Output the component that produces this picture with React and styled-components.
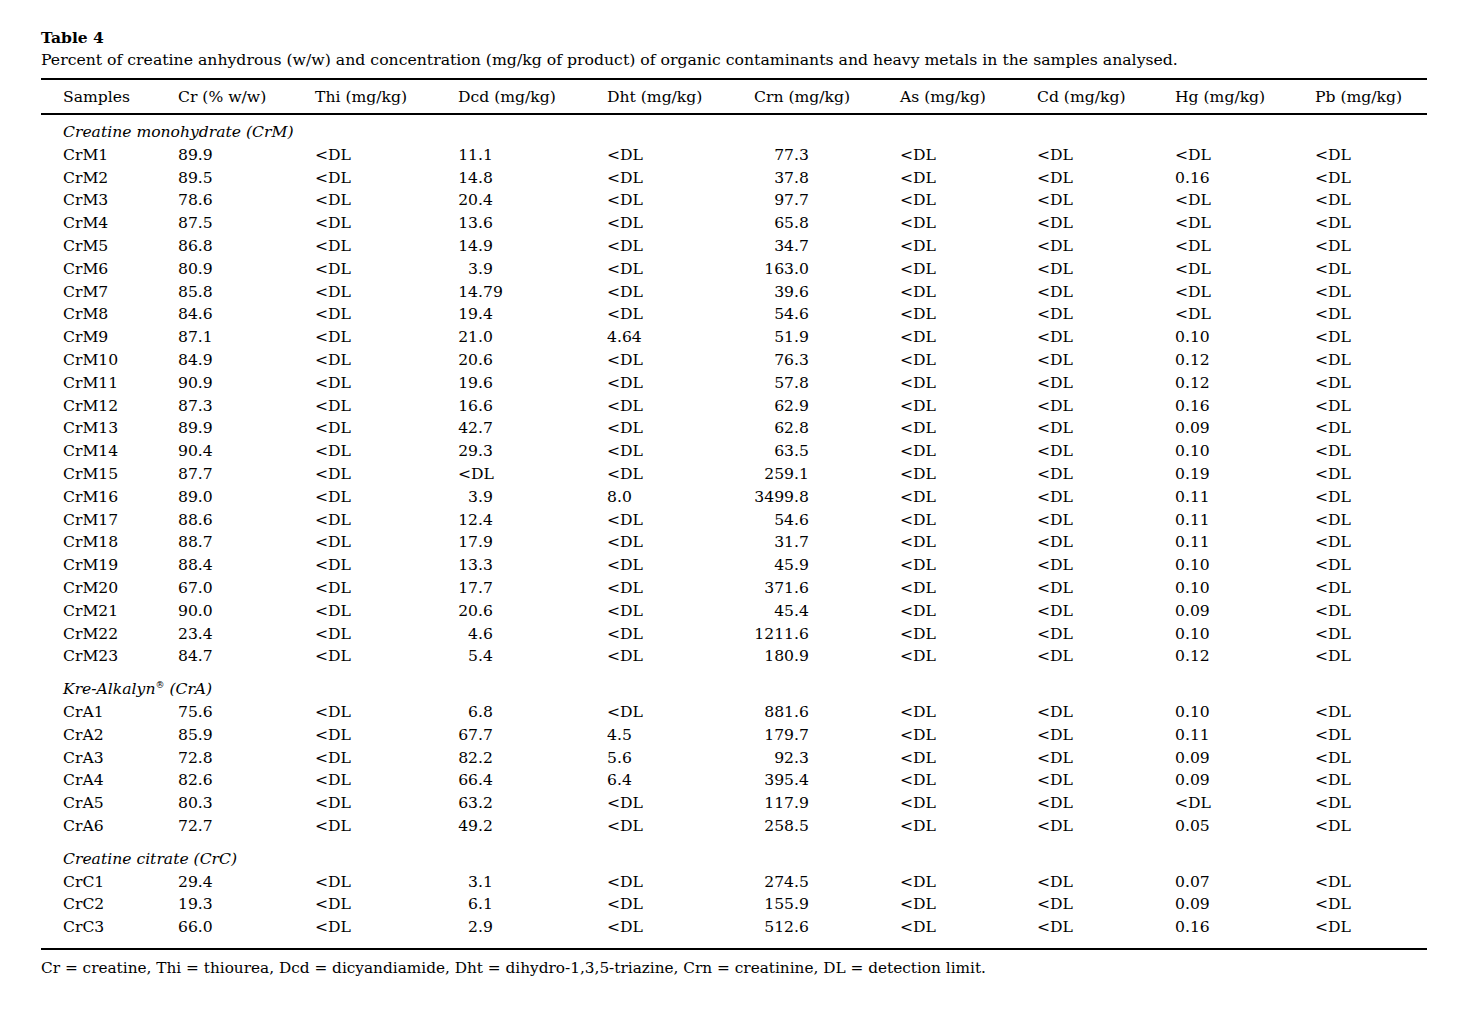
import React from 'react';
import styled, { createGlobalStyle } from 'styled-components';

const GlobalStyle = createGlobalStyle`
  body {
    margin: 0;
    background: #fff;
    color: #000;
    font-family: "DejaVu Serif", "Liberation Serif", serif;
  }
`;

// column widths, measured from the left edge of the samples column
const COLS = '115px 137px 143px 149px 147px 146px 137px 138px 140px 1fr';

const sections = [
  {
    title: 'Creatine monohydrate (CrM)',
    rows: [
      ['CrM1', '89.9', '<DL', '11.1', '<DL', '77.3', '<DL', '<DL', '<DL', '<DL'],
      ['CrM2', '89.5', '<DL', '14.8', '<DL', '37.8', '<DL', '<DL', '0.16', '<DL'],
      ['CrM3', '78.6', '<DL', '20.4', '<DL', '97.7', '<DL', '<DL', '<DL', '<DL'],
      ['CrM4', '87.5', '<DL', '13.6', '<DL', '65.8', '<DL', '<DL', '<DL', '<DL'],
      ['CrM5', '86.8', '<DL', '14.9', '<DL', '34.7', '<DL', '<DL', '<DL', '<DL'],
      ['CrM6', '80.9', '<DL', '3.9', '<DL', '163.0', '<DL', '<DL', '<DL', '<DL'],
      ['CrM7', '85.8', '<DL', '14.79', '<DL', '39.6', '<DL', '<DL', '<DL', '<DL'],
      ['CrM8', '84.6', '<DL', '19.4', '<DL', '54.6', '<DL', '<DL', '<DL', '<DL'],
      ['CrM9', '87.1', '<DL', '21.0', '4.64', '51.9', '<DL', '<DL', '0.10', '<DL'],
      ['CrM10', '84.9', '<DL', '20.6', '<DL', '76.3', '<DL', '<DL', '0.12', '<DL'],
      ['CrM11', '90.9', '<DL', '19.6', '<DL', '57.8', '<DL', '<DL', '0.12', '<DL'],
      ['CrM12', '87.3', '<DL', '16.6', '<DL', '62.9', '<DL', '<DL', '0.16', '<DL'],
      ['CrM13', '89.9', '<DL', '42.7', '<DL', '62.8', '<DL', '<DL', '0.09', '<DL'],
      ['CrM14', '90.4', '<DL', '29.3', '<DL', '63.5', '<DL', '<DL', '0.10', '<DL'],
      ['CrM15', '87.7', '<DL', '<DL', '<DL', '259.1', '<DL', '<DL', '0.19', '<DL'],
      ['CrM16', '89.0', '<DL', '3.9', '8.0', '3499.8', '<DL', '<DL', '0.11', '<DL'],
      ['CrM17', '88.6', '<DL', '12.4', '<DL', '54.6', '<DL', '<DL', '0.11', '<DL'],
      ['CrM18', '88.7', '<DL', '17.9', '<DL', '31.7', '<DL', '<DL', '0.11', '<DL'],
      ['CrM19', '88.4', '<DL', '13.3', '<DL', '45.9', '<DL', '<DL', '0.10', '<DL'],
      ['CrM20', '67.0', '<DL', '17.7', '<DL', '371.6', '<DL', '<DL', '0.10', '<DL'],
      ['CrM21', '90.0', '<DL', '20.6', '<DL', '45.4', '<DL', '<DL', '0.09', '<DL'],
      ['CrM22', '23.4', '<DL', '4.6', '<DL', '1211.6', '<DL', '<DL', '0.10', '<DL'],
      ['CrM23', '84.7', '<DL', '5.4', '<DL', '180.9', '<DL', '<DL', '0.12', '<DL'],
    ],
  },
  {
    title: (
      <>
        Kre-Alkalyn<sup>®</sup> (CrA)
      </>
    ),
    rows: [
      ['CrA1', '75.6', '<DL', '6.8', '<DL', '881.6', '<DL', '<DL', '0.10', '<DL'],
      ['CrA2', '85.9', '<DL', '67.7', '4.5', '179.7', '<DL', '<DL', '0.11', '<DL'],
      ['CrA3', '72.8', '<DL', '82.2', '5.6', '92.3', '<DL', '<DL', '0.09', '<DL'],
      ['CrA4', '82.6', '<DL', '66.4', '6.4', '395.4', '<DL', '<DL', '0.09', '<DL'],
      ['CrA5', '80.3', '<DL', '63.2', '<DL', '117.9', '<DL', '<DL', '<DL', '<DL'],
      ['CrA6', '72.7', '<DL', '49.2', '<DL', '258.5', '<DL', '<DL', '0.05', '<DL'],
    ],
  },
  {
    title: 'Creatine citrate (CrC)',
    rows: [
      ['CrC1', '29.4', '<DL', '3.1', '<DL', '274.5', '<DL', '<DL', '0.07', '<DL'],
      ['CrC2', '19.3', '<DL', '6.1', '<DL', '155.9', '<DL', '<DL', '0.09', '<DL'],
      ['CrC3', '66.0', '<DL', '2.9', '<DL', '512.6', '<DL', '<DL', '0.16', '<DL'],
    ],
  },
];

const headers = [
  'Samples',
  'Cr (% w/w)',
  'Thi (mg/kg)',
  'Dcd (mg/kg)',
  'Dht (mg/kg)',
  'Crn (mg/kg)',
  'As (mg/kg)',
  'Cd (mg/kg)',
  'Hg (mg/kg)',
  'Pb (mg/kg)',
];

// decimal point offsets for the aligned columns (Dcd, Crn)
const decimalPoint = { 3: 20, 5: 40 };

const Page = styled.div`
  padding: 28px 31px 40px 41px;
`;

const Title = styled.div`
  font-weight: bold;
  font-size: 15.5px;
  line-height: 20px;
`;

const Caption = styled.div`
  font-size: 15.7px;
  line-height: 22px;
  margin-top: 1px;
  margin-bottom: 7px;
`;

const Table = styled.div`
  border-top: 2px solid #000;
  border-bottom: 2px solid #000;
  font-size: 15.6px;
`;

const HeaderRow = styled.div`
  display: grid;
  grid-template-columns: ${COLS};
  padding-left: 22px;
  height: 33px;
  align-items: center;
  border-bottom: 2px solid #000;
`;

const Body = styled.div`
  padding: 6px 0 9px;
`;

const SectionTitle = styled.div`
  font-style: italic;
  padding-left: 22px;
  line-height: 22.8px;
  margin-top: ${(p) => (p.$first ? '0' : '10px')};

  sup {
    font-size: 9px;
    line-height: 0;
    vertical-align: 6px;
  }
`;

const Row = styled.div`
  display: grid;
  grid-template-columns: ${COLS};
  padding-left: 22px;
  line-height: 22.8px;
`;

const Cell = styled.div`
  white-space: nowrap;
`;

const IntPart = styled.span`
  display: inline-block;
  width: ${(p) => p.$w}px;
  text-align: right;
`;

const Footer = styled.div`
  font-size: 15.3px;
  line-height: 22px;
  padding-top: 7px;
`;

function DecimalCell({ value, point }) {
  if (!/^\d/.test(value)) return <Cell>{value}</Cell>;
  const [whole, frac] = value.split('.');
  return (
    <Cell>
      <IntPart $w={point}>{whole}</IntPart>
      {frac !== undefined && '.' + frac}
    </Cell>
  );
}

export default function App() {
  return (
    <Page>
      <GlobalStyle />
      <Title>Table 4</Title>
      <Caption>
        Percent of creatine anhydrous (w/w) and concentration (mg/kg of product) of organic contaminants and heavy
        metals in the samples analysed.
      </Caption>
      <Table>
        <HeaderRow>
          {headers.map((h) => (
            <Cell key={h}>{h}</Cell>
          ))}
        </HeaderRow>
        <Body>
          {sections.map((section, si) => (
            <React.Fragment key={si}>
              <SectionTitle $first={si === 0}>{section.title}</SectionTitle>
              {section.rows.map((row) => (
                <Row key={row[0]}>
                  {row.map((v, i) =>
                    decimalPoint[i] !== undefined ? (
                      <DecimalCell key={i} value={v} point={decimalPoint[i]} />
                    ) : (
                      <Cell key={i}>{v}</Cell>
                    )
                  )}
                </Row>
              ))}
            </React.Fragment>
          ))}
        </Body>
      </Table>
      <Footer>
        Cr = creatine, Thi = thiourea, Dcd = dicyandiamide, Dht = dihydro-1,3,5-triazine, Crn = creatinine, DL =
        detection limit.
      </Footer>
    </Page>
  );
}
